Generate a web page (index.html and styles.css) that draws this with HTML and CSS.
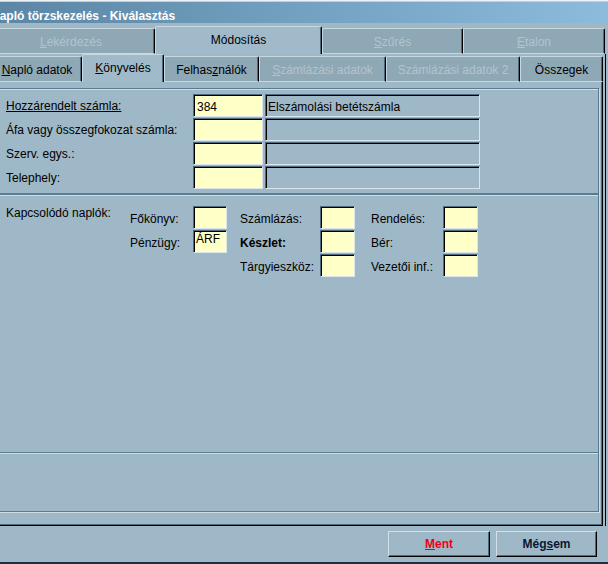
FILE: index.html
```html
<!DOCTYPE html>
<html lang="hu">
<head>
<meta charset="utf-8">
<title>Napló törzskezelés - Kiválasztás</title>
<link rel="stylesheet" href="styles.css">
</head>
<body>
<div class="title">Napló törzskezelés - Kiválasztás</div>
<div class="win">
  <div class="tabs tabs1">
    <div class="tab dis w-lek"><u>L</u>ekérdezés</div>
    <div class="tab sel w-mod">Módosítás</div>
    <div class="tab dis w-szu"><u>S</u>zűrés</div>
    <div class="tab dis w-eta"><u>E</u>talon</div>
  </div>
  <div class="tabs tabs2">
    <div class="tab w-nap"><u>N</u>apló adatok</div>
    <div class="tab sel w-kon"><u>K</u>önyvelés</div>
    <div class="tab w-fel">Felhas<u>z</u>nálók</div>
    <div class="tab dis w-sz1"><u>S</u>zámlázási adatok</div>
    <div class="tab dis w-sz2">Számlázási adatok 2</div>
    <div class="tab w-oss">Összegek</div>
  </div>
  <div class="page">
    <div class="group g1">
      <div class="frow">
        <div class="flabel"><u>Hozzárendelt számla:</u></div>
        <div class="edit acct">384</div>
        <div class="desc">Elszámolási betétszámla</div>
      </div>
      <div class="frow">
        <div class="flabel">Áfa vagy összegfokozat számla:</div>
        <div class="edit acct"></div>
        <div class="desc"></div>
      </div>
      <div class="frow">
        <div class="flabel">Szerv. egys.:</div>
        <div class="edit acct"></div>
        <div class="desc"></div>
      </div>
      <div class="frow">
        <div class="flabel">Telephely:</div>
        <div class="edit acct"></div>
        <div class="desc"></div>
      </div>
    </div>
    <div class="group g2">
      <div class="grid">
        <div class="glabel main c1 r1">Kapcsolódó naplók:</div>
        <div class="glabel c2 r1">Főkönyv:</div>
        <div class="edit c3 r1"></div>
        <div class="glabel c4 r1">Számlázás:</div>
        <div class="edit c5 r1"></div>
        <div class="glabel c6 r1">Rendelés:</div>
        <div class="edit c7 r1"></div>

        <div class="glabel c2 r2">Pénzügy:</div>
        <div class="edit high c3 r2">ÁRF</div>
        <div class="glabel bold c4 r2">Készlet:</div>
        <div class="edit c5 r2"></div>
        <div class="glabel c6 r2">Bér:</div>
        <div class="edit c7 r2"></div>

        <div class="glabel c4 r3">Tárgyieszköz:</div>
        <div class="edit c5 r3"></div>
        <div class="glabel c6 r3">Vezetői inf.:</div>
        <div class="edit c7 r3"></div>
      </div>
    </div>
    <div class="group g3"></div>
  </div>
  <div class="buttons">
    <div class="btn ment"><u>M</u>ent</div>
    <div class="btn cancel">Még<u>s</u>em</div>
  </div>
</div>
</body>
</html>
```

FILE: styles.css
```css
* {
  box-sizing: border-box;
}

html, body {
  margin: 0;
  padding: 0;
}

body {
  width: 608px;
  height: 564px;
  overflow: hidden;
  background: #9fb8c7;
  font-family: "Liberation Sans", Arial, sans-serif;
  font-size: 12px;
  color: #000;
}

u {
  text-decoration: underline;
  text-underline-offset: 1px;
}

/* ---------- title bar ---------- */
.title {
  margin-left: -13px;
  width: 621px;
  height: 23px;
  border-top: 1px solid #eef2f4;
  box-shadow: inset 0 1px 0 #c4cfd6;
  padding: 8px 0 0 4px;
  line-height: 14px;
  font-weight: bold;
  color: #fff;
  white-space: nowrap;
  background: linear-gradient(to right, #5a85a5, #8dbbdc);
}

/* ---------- window ---------- */
.win {
  margin-left: -13px;
  width: 618px;
}

/* ---------- tabs ---------- */
.tabs {
  display: flex;
  align-items: flex-end;
}

.tabs1 {
  height: 31px;
}

.tabs2 {
  height: 28px;
  padding-left: 5px;
  box-shadow: 1px 0 0 #000;
}

.tab {
  flex: none;
  text-align: center;
  white-space: nowrap;
  line-height: 14px;
  padding-top: 6px;
  background: #8ea8b6;
  border-top: 1px solid #c9d7df;
  border-left: 1px solid #c9d7df;
  border-right: 1px solid #000;
  border-bottom: 1px solid #c9d7df;
  border-top-left-radius: 2px;
  border-top-right-radius: 2px;
  box-shadow: inset -1px 0 0 #4d6a7e;
}

.tab.sel {
  background: #a0bac9;
  border-bottom: 0;
  height: 28px;
}

.tabs1 .tab {
  height: 26px;
}

.tabs1 .tab.sel {
  height: 28px;
}

.tabs2 .tab {
  height: 26px;
}

.tabs2 .tab.sel {
  height: 28px;
}

.tab.dis {
  color: #b3c4ce;
}

.w-lek { width: 168px; }
.w-mod { width: 167px; }
.w-szu { width: 141px; }
.w-eta { width: 142px; }

.w-nap { width: 90px; }
.w-kon { width: 82px; }
.w-fel { width: 95px; }
.w-sz1 { width: 127px; }
.w-sz2 { width: 134px; }
.w-oss { width: 83px; }

/* ---------- page ---------- */
.page {
  margin-right: 2px;
  background: #9fb8c7;
  border-right: 1px solid #000;
  border-bottom: 1px solid #000;
  box-shadow: inset -1px -1px 0 #4d6a7e, 2px 0 0 #9fb8c7, 3px 0 0 #000;
  padding: 6px 3px 13px 10px;
}

.group {
  border: 1px solid #5b7b91;
  box-shadow: inset 1px 1px 0 #d0dde5, 1px 1px 0 #d0dde5;
}

.g1 {
  height: 106px;
  padding: 5px 0 0 8px;
}

.frow {
  display: flex;
  height: 23px;
  margin-bottom: 1px;
}

.flabel {
  width: 187px;
  padding-top: 2px;
  line-height: 21px;
  white-space: nowrap;
}

.edit {
  height: 23px;
  background: #ffffc8;
  border: 1px solid;
  border-color: #4d6a7e #dbe5eb #dbe5eb #4d6a7e;
  box-shadow: inset 1px 1px 0 #000;
  padding: 5px 0 0 3px;
  line-height: 14px;
  white-space: nowrap;
}

.edit.acct {
  width: 70px;
}

.edit.high {
  padding: 2px 0 0 2px;
  line-height: 12px;
}

.desc {
  width: 215px;
  height: 23px;
  margin-left: 2px;
  border: 1px solid;
  border-color: #4d6a7e #dbe5eb #dbe5eb #4d6a7e;
  box-shadow: inset 1px 1px 0 #000;
  padding: 5px 0 0 2px;
  line-height: 14px;
  white-space: nowrap;
}

.g2 {
  height: 259px;
  padding: 11px 0 0 8px;
}

.grid {
  display: grid;
  grid-template-columns: 124px 63px 34px 93px 35px 88px 35px;
  grid-auto-rows: 23px;
  row-gap: 1px;
}

.glabel {
  padding-top: 4px;
  line-height: 19px;
  white-space: nowrap;
}

.glabel.main {
  padding-top: 0;
  line-height: 15px;
}

.glabel.bold {
  font-weight: bold;
}

.c1 { grid-column: 1; }
.c2 { grid-column: 2; }
.c3 { grid-column: 3; }
.c4 { grid-column: 4; padding-left: 13px; }
.c5 { grid-column: 5; }
.c6 { grid-column: 6; padding-left: 16px; }
.c7 { grid-column: 7; }
.r1 { grid-row: 1; }
.r2 { grid-row: 2; }
.r3 { grid-row: 3; }

.edit.c3, .edit.c5, .edit.c7 {
  padding-left: 2px;
}

.g3 {
  margin-top: -1px;
  height: 60px;
}

/* ---------- buttons ---------- */
.buttons {
  display: flex;
  justify-content: flex-end;
  gap: 6px;
  margin-right: -3px;
  padding: 5px 11px 5px 0;
  border-bottom: 2px solid #1c3042;
}

.btn {
  height: 26px;
  line-height: 24px;
  text-align: center;
  font-weight: bold;
  background: #9fb8c7;
  border-top: 1px solid #d3e0e8;
  border-left: 1px solid #d3e0e8;
  border-right: 1px solid #000;
  border-bottom: 1px solid #000;
  box-shadow: inset -1px -1px 0 #4d6a7e;
}

.btn.ment {
  width: 102px;
  color: #f00014;
}

.btn.cancel {
  width: 101px;
  color: #0c1630;
}
```
